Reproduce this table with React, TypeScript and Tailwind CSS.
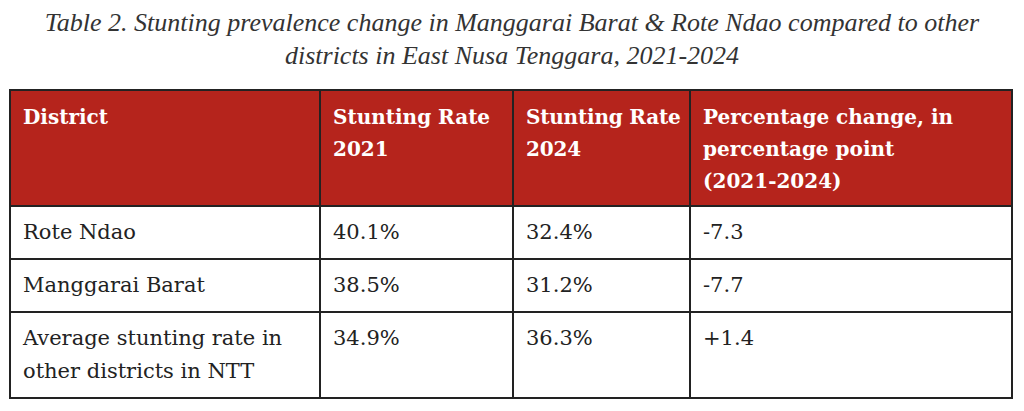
const rows = [
  { district: "Rote Ndao", r2021: "40.1%", r2024: "32.4%", change: "-7.3" },
  { district: "Manggarai Barat", r2021: "38.5%", r2024: "31.2%", change: "-7.7" },
  { district: "Average stunting rate in other districts in NTT", r2021: "34.9%", r2024: "36.3%", change: "+1.4" },
]

export default function App() {
  return (
    <div className="w-[1024px] h-[411px] bg-white overflow-hidden font-['DejaVu_Serif',serif] text-[#222]">
      <p className="pt-[6px] text-center italic text-[26px] leading-[33px] text-[#333] font-['Liberation_Serif',serif] px-8">
        Table 2. Stunting prevalence change in Manggarai Barat &amp; Rote Ndao compared to other districts in East Nusa Tenggara, 2021-2024
      </p>
      <table className="ml-[9px] mt-[17px] w-[1004px] border-collapse table-fixed">
        <colgroup>
          <col className="w-[310px]" />
          <col className="w-[193px]" />
          <col className="w-[177px]" />
          <col />
        </colgroup>
        <thead>
          <tr className="bg-[#b5241c] text-white text-[20px] leading-[32px] font-bold align-top">
            <th className="border-2 border-[#222] px-3 pt-[10px] pb-[8px] text-left font-bold">District</th>
            <th className="border-2 border-[#222] px-3 pt-[10px] pb-[8px] text-left font-bold whitespace-nowrap">Stunting Rate<br />2021</th>
            <th className="border-2 border-[#222] pl-3 pr-1 pt-[10px] pb-[8px] text-left font-bold whitespace-nowrap tracking-[-0.2px]">Stunting Rate<br />2024</th>
            <th className="border-2 border-[#222] px-3 pt-[10px] pb-[8px] text-left font-bold">
              Percentage change, in<br />percentage point<br />(2021-2024)
            </th>
          </tr>
        </thead>
        <tbody>
          {rows.map((r) => (
            <tr key={r.district} className="text-[21px] leading-[33px] align-top">
              <td className="border-2 border-[#222] px-3 pt-[9px] pb-[9px]">{r.district}</td>
              <td className="border-2 border-[#222] px-3 pt-[9px] pb-[9px]">{r.r2021}</td>
              <td className="border-2 border-[#222] px-3 pt-[9px] pb-[9px]">{r.r2024}</td>
              <td className="border-2 border-[#222] px-3 pt-[9px] pb-[9px]">{r.change}</td>
            </tr>
          ))}
        </tbody>
      </table>
    </div>
  )
}
